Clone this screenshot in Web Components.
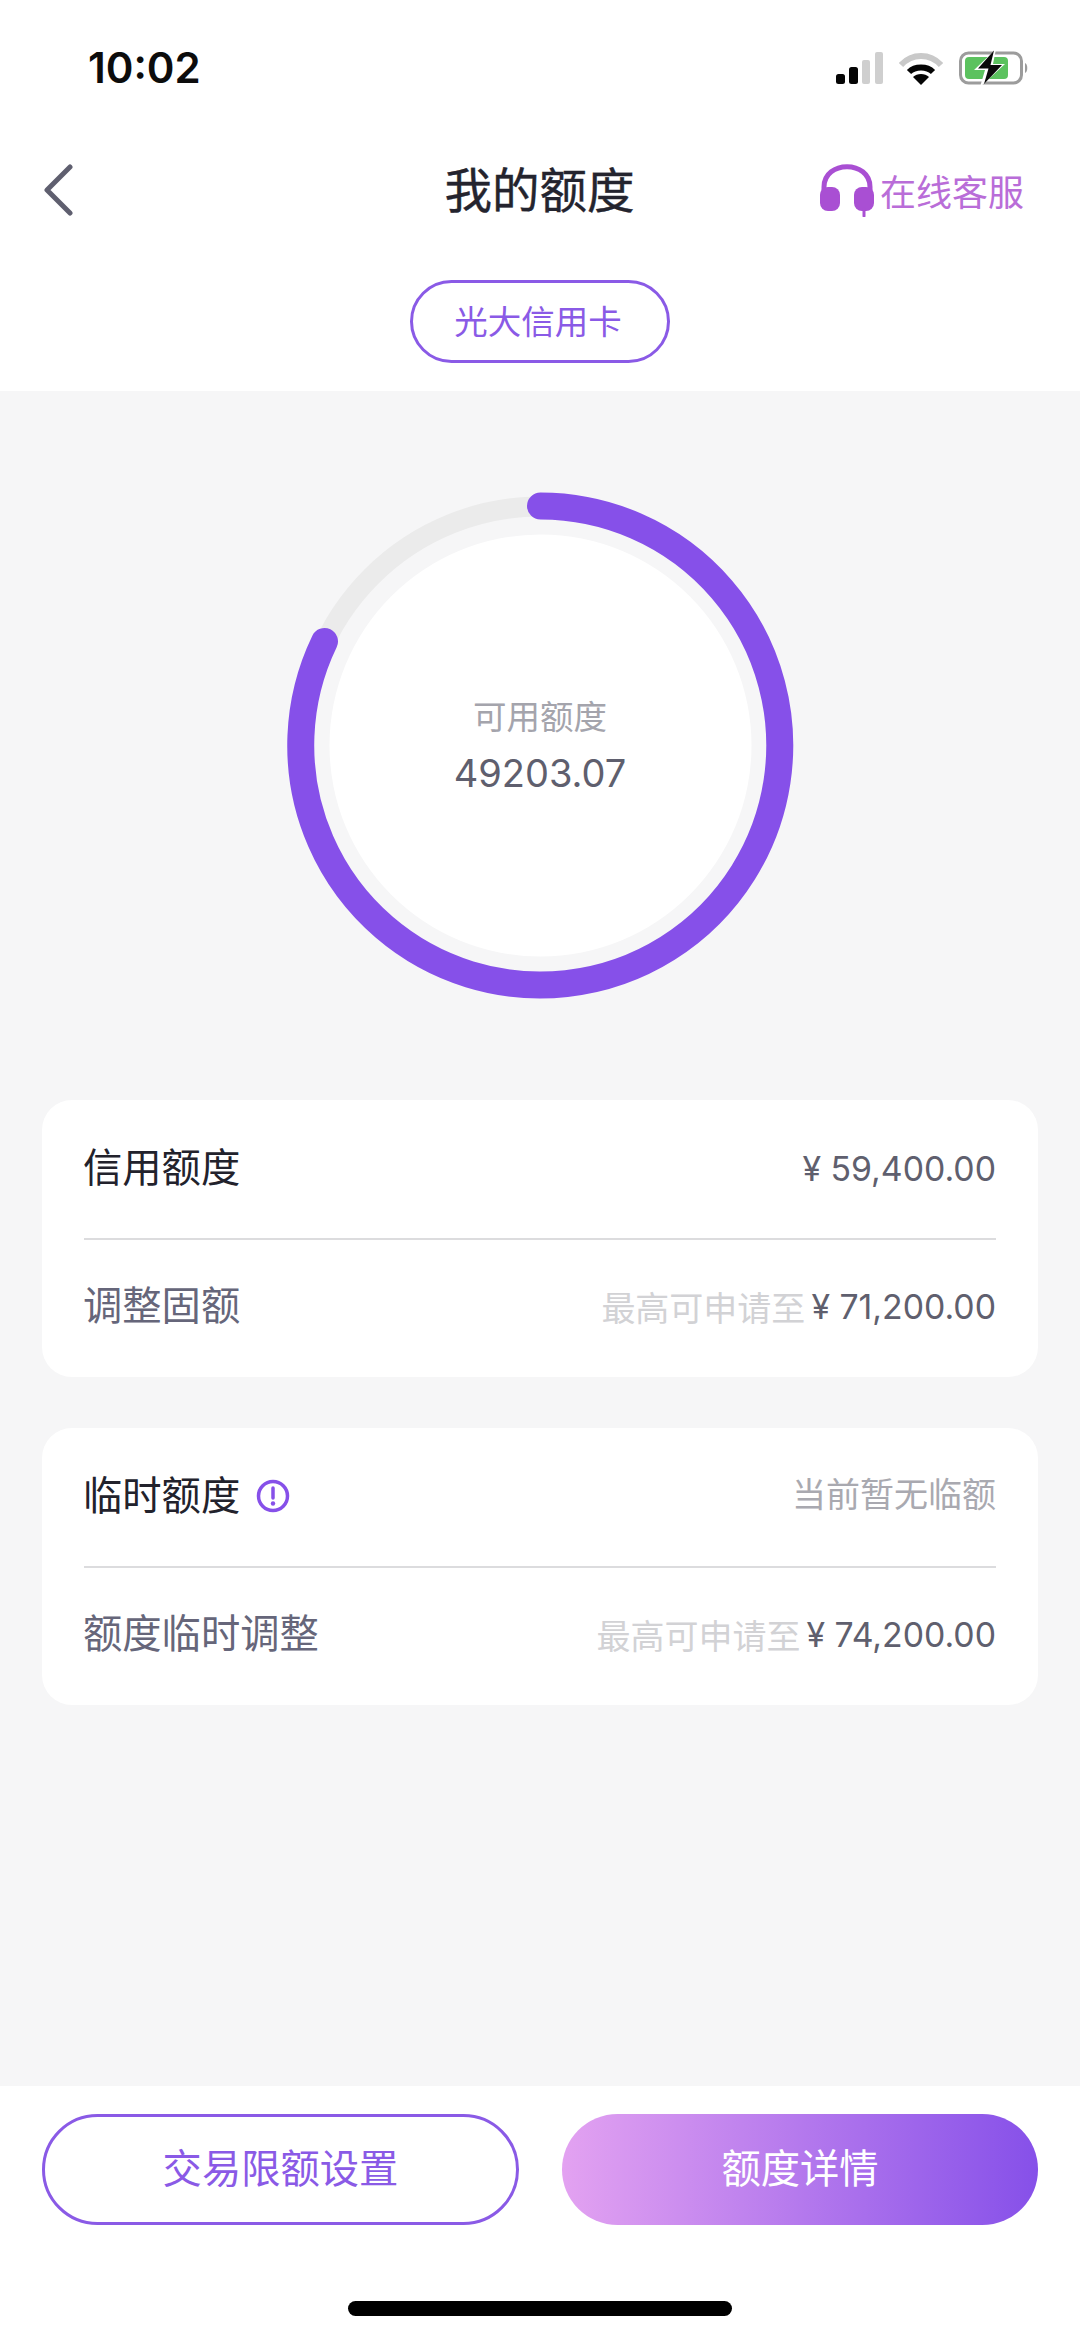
<!DOCTYPE html>
<html lang="zh">
<head>
<meta charset="utf-8">
<title>我的额度</title>
<style>
  html, body { margin: 0; padding: 0; background: #fff; }
  body { font-family: "Noto Sans CJK SC", "Liberation Sans", sans-serif; }
</style>
</head>
<body>
<credit-page>
  <status-bar slot="top" time="10:02"></status-bar>
  <nav-bar slot="top" title="我的额度" action="在线客服"></nav-bar>
  <pill-tag slot="top">光大信用卡</pill-tag>

  <credit-ring label="可用额度" value="49203.07"></credit-ring>

  <credit-card>
    <credit-row label="信用额度" strong value="¥ 59,400.00"></credit-row>
    <credit-row label="调整固额" hint="最高可申请至" value="¥ 71,200.00"></credit-row>
  </credit-card>
  <credit-card>
    <credit-row label="临时额度" strong info note="当前暂无临额"></credit-row>
    <credit-row label="额度临时调整" hint="最高可申请至" value="¥ 74,200.00"></credit-row>
  </credit-card>

  <action-bar slot="bottom" left="交易限额设置" right="额度详情"></action-bar>
</credit-page>

<script>
const CJK = '"Noto Sans CJK SC", "Liberation Sans", sans-serif';
const LATIN = 'Inter, "Liberation Sans", "Noto Sans CJK SC", sans-serif';

class CreditPage extends HTMLElement {
  constructor() {
    super();
    this.attachShadow({ mode: 'open' }).innerHTML = `
      <style>
        :host { display: flex; flex-direction: column; width: 1080px; height: 2338px; background: #fff; overflow: hidden; }
        header { flex: none; height: 391px; display: flex; flex-direction: column; }
        main { flex: 1; background: #f6f6f7; padding: 101px 42px 0; display: flex; flex-direction: column; }
        footer { flex: none; }
        ::slotted(credit-ring) { margin: 0 auto 101px; }
        ::slotted(credit-card) { margin-bottom: 51px; }
      </style>
      <header><slot name="top"></slot></header>
      <main><slot></slot></main>
      <footer><slot name="bottom"></slot></footer>`;
  }
}

class StatusBar extends HTMLElement {
  connectedCallback() {
    this.attachShadow({ mode: 'open' }).innerHTML = `
      <style>
        :host { display: flex; justify-content: space-between; align-items: center; height: 136px; padding: 0 51px 0 88px; box-sizing: border-box; }
        .time { font: 600 42px/1 Inter, "Liberation Sans", sans-serif; color: #0c0c0c; }
        .icons { display: flex; align-items: center; gap: 16px; }
        svg { display: block; }
      </style>
      <span class="time">${this.getAttribute('time')}</span>
      <div class="icons">
        <svg width="47" height="32" viewBox="0 0 47 32">
          <rect x="0" y="22" width="9" height="10" rx="2.5" fill="#050505"/>
          <rect x="13" y="15" width="9" height="17" rx="2.5" fill="#050505"/>
          <rect x="26" y="8" width="8" height="24" rx="2" fill="#cfcfcf"/>
          <rect x="39" y="0" width="8" height="32" rx="2" fill="#cfcfcf"/>
        </svg>
        <svg width="44" height="33" viewBox="0 0 44 33" fill="none">
          <path d="M2 13C13 1 31 1 42 13" stroke="#c9c9c9" stroke-width="6"/>
          <path d="M10 20C16 14 28 14 34 20" stroke="#050505" stroke-width="6"/>
          <path d="M14 25C18 21 26 21 30 25L22 33Z" fill="#050505"/>
        </svg>
        <svg width="70" height="38" viewBox="0 0 70 38" fill="none">
          <rect x="1.500" y="4" width="61" height="30" rx="8" stroke="#9c9c9c" stroke-width="3"/>
          <rect x="6" y="8" width="43" height="22" rx="4" fill="#5cc25f"/>
          <path d="M66 14C69 15 69 23 66 24Z" fill="#9c9c9c"/>
          <path d="M37 0L15 21H26L21 38L46 15H34Z" fill="#fff"/>
          <path d="M35 1.500L19 19.500H29.500L25 35L43 16H31.500Z" fill="#0a0a0a"/>
        </svg>
      </div>`;
  }
}

class NavBar extends HTMLElement {
  connectedCallback() {
    this.attachShadow({ mode: 'open' }).innerHTML = `
      <style>
        :host { display: grid; grid-template-columns: 1fr auto 1fr; align-items: center; height: 108px; padding: 0 56px 0 43px; box-sizing: border-box; }
        .back { display: block; }
        h1 { margin: 0 0 5px 12px; font: 400 47.500px/1 ${CJK}; color: #24242e; -webkit-text-stroke: .4px #24242e; }
        .action { justify-self: end; display: flex; align-items: center; gap: 5px; font: 400 36px/1 ${CJK}; color: #b96dd8; }
        .action span { margin-bottom: 1px; }
        svg { display: block; }
      </style>
      <svg class="back" width="30" height="52" viewBox="0 0 30 52" fill="none">
        <path d="M27 3L4 26L27 49" stroke="#5f5f6f" stroke-width="5" stroke-linecap="round" stroke-linejoin="round"/>
      </svg>
      <h1>${this.getAttribute('title')}</h1>
      <div class="action">
        <svg width="56" height="54" viewBox="0 0 56 54" fill="none">
          <path d="M5 30V24C5 -3 51 -3 51 24V30" stroke="#a94fd3" stroke-width="5"/>
          <rect x="1" y="24" width="20" height="24" rx="8" fill="#a94fd3"/>
          <rect x="35" y="24" width="20" height="24" rx="8" fill="#a94fd3"/>
          <path d="M45 46V53" stroke="#a94fd3" stroke-width="3" stroke-linecap="round"/>
        </svg>
        <span>${this.getAttribute('action')}</span>
      </div>`;
  }
}

class PillTag extends HTMLElement {
  constructor() {
    super();
    this.attachShadow({ mode: 'open' }).innerHTML = `
      <style>
        :host { display: flex; justify-content: center; margin-top: 36px; }
        span { display: flex; align-items: center; justify-content: center; width: 260px; height: 83px; box-sizing: border-box;
          padding: 0 4px 4px 0; border: 3px solid #8a5ae6; border-radius: 42px; font: 400 33.500px/1 ${CJK}; color: #8a5ae6; }
      </style>
      <span><slot></slot></span>`;
  }
}

class CreditRing extends HTMLElement {
  connectedCallback() {
    this.attachShadow({ mode: 'open' }).innerHTML = `
      <style>
        :host { display: block; position: relative; width: 507px; height: 507px; }
        svg { display: block; }
        .center { position: absolute; inset: 0; display: flex; flex-direction: column; align-items: center; justify-content: center; gap: 16px; }
        .label { font: 400 33.500px/1.2 ${CJK}; color: #a4a4ac; }
        .value { font: 400 38px/1.2 ${LATIN}; color: #5f5f6e; }
      </style>
      <svg width="507" height="507" viewBox="-253.500 -253.500 507 507" fill="none">
        <circle r="211" fill="#fff"/>
        <circle r="239" stroke="#ebebeb" stroke-width="20"/>
        <path d="M0 -239.500A239.500 239.500 0 1 1 -216 -104" stroke="#8650e9" stroke-width="27" stroke-linecap="round"/>
      </svg>
      <div class="center">
        <span class="label">${this.getAttribute('label')}</span>
        <span class="value">${this.getAttribute('value')}</span>
      </div>`;
  }
}

class CreditCard extends HTMLElement {
  constructor() {
    super();
    this.attachShadow({ mode: 'open' }).innerHTML = `
      <style>
        :host { display: flex; flex-direction: column; height: 277px; padding: 0 42px; box-sizing: border-box; background: #fff; border-radius: 30px; }
        ::slotted(credit-row:first-child) { height: 140px; border-bottom: 2px solid #dcdcde; }
        ::slotted(credit-row:last-child) { flex: 1; padding-bottom: 3px; }
      </style>
      <slot></slot>`;
  }
}

class CreditRow extends HTMLElement {
  connectedCallback() {
    const strong = this.hasAttribute('strong');
    const hint = this.getAttribute('hint');
    const note = this.getAttribute('note');
    const value = this.getAttribute('value');
    this.attachShadow({ mode: 'open' }).innerHTML = `
      <style>
        :host { display: flex; justify-content: space-between; align-items: center; box-sizing: border-box; }
        .label { display: flex; align-items: center; gap: 16px; margin: 0 0 8px -1px; font: 400 39.300px/1 ${CJK}; color: ${strong ? '#22222c' : '#66667a'}; }
        .label svg { margin-top: 6px; }
        .right { display: flex; align-items: center; gap: 6px; }
        .hint { margin-bottom: 1px; font: 400 34px/1 ${CJK}; color: #d2d2d5; }
        .note { margin-bottom: 8px; font: 400 34px/1 ${CJK}; color: #a9a9b0; }
        .value { margin-bottom: 1px; font: 400 33.800px/1 ${LATIN}; color: #5f5f6e; }
        svg { display: block; }
      </style>
      <span class="label">${this.getAttribute('label')}${this.hasAttribute('info') ? `
        <svg width="34" height="34" viewBox="0 0 34 34" fill="none">
          <circle cx="17" cy="17" r="14.500" stroke="#8650e9" stroke-width="3.500"/>
          <path d="M17 9V19" stroke="#8650e9" stroke-width="3.500" stroke-linecap="round"/>
          <circle cx="17" cy="24.500" r="2.200" fill="#8650e9"/>
        </svg>` : ''}</span>
      <span class="right">
        ${hint ? `<span class="hint">${hint}</span>` : ''}
        ${note ? `<span class="note">${note}</span>` : ''}
        ${value ? `<span class="value">${value}</span>` : ''}
      </span>`;
  }
}

class ActionBar extends HTMLElement {
  connectedCallback() {
    this.attachShadow({ mode: 'open' }).innerHTML = `
      <style>
        :host { display: block; height: 252px; padding: 28px 42px 0; box-sizing: border-box; background: #fff; position: relative; }
        .buttons { display: grid; grid-template-columns: 477px 476px; justify-content: space-between; }
        button { height: 111px; border-radius: 56px; font: 400 39.300px/1 ${CJK}; padding: 0 0 8px; box-sizing: border-box; }
        .ghost { background: #fff; border: 3px solid #8a5ae6; color: #8a5ae6; }
        .solid { background: linear-gradient(90deg, #e3a2f1, #8650e9); border: 0; color: #fff; }
        .home { width: 384px; height: 15px; margin: 76px auto 0; background: #000; border-radius: 8px; }
      </style>
      <div class="buttons">
        <button class="ghost">${this.getAttribute('left')}</button>
        <button class="solid">${this.getAttribute('right')}</button>
      </div>
      <div class="home"></div>`;
  }
}

customElements.define('credit-page', CreditPage);
customElements.define('status-bar', StatusBar);
customElements.define('nav-bar', NavBar);
customElements.define('pill-tag', PillTag);
customElements.define('credit-ring', CreditRing);
customElements.define('credit-card', CreditCard);
customElements.define('credit-row', CreditRow);
customElements.define('action-bar', ActionBar);
</script>
</body>
</html>
